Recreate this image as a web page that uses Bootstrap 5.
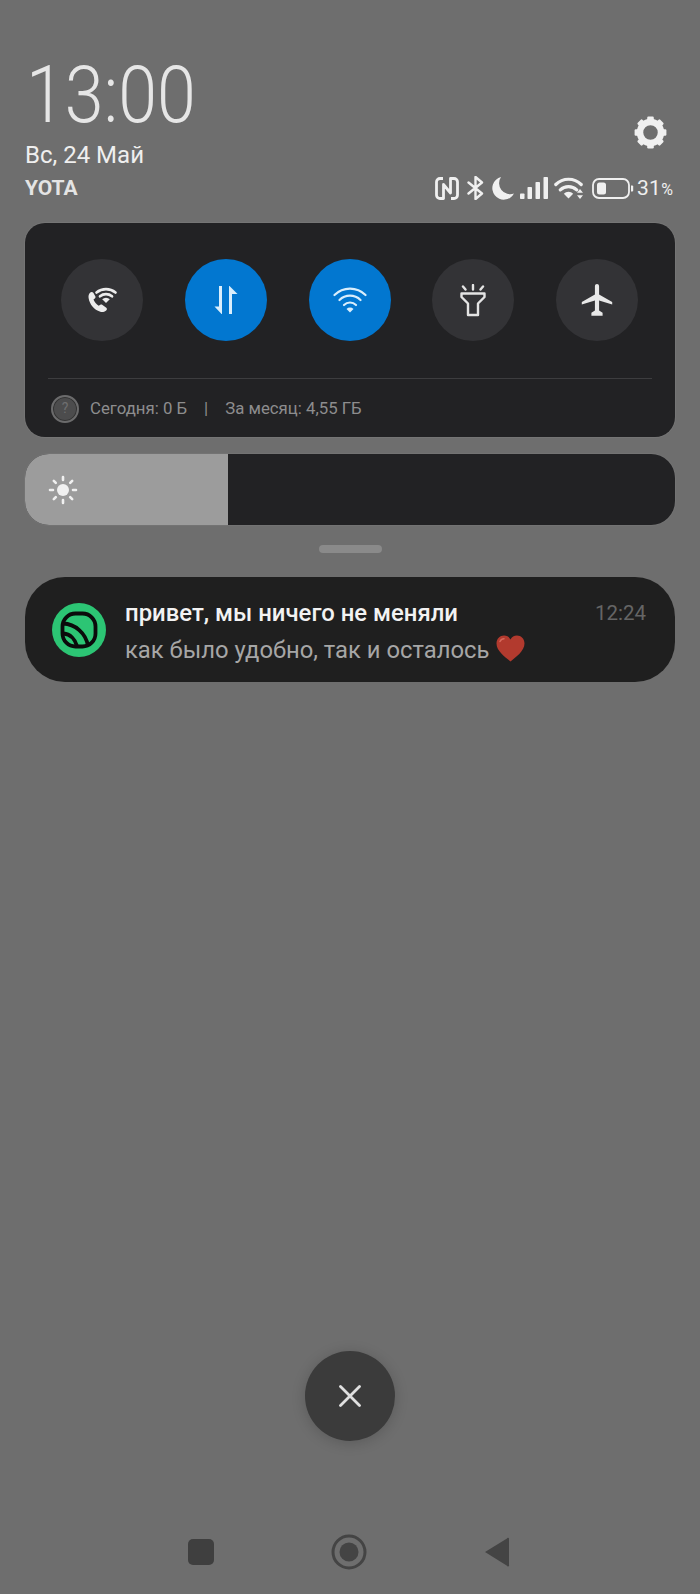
<!doctype html>
<html lang="ru"><head><meta charset="utf-8">
<link href="https://cdn.jsdelivr.net/npm/bootstrap@5.3.0/dist/css/bootstrap.min.css" rel="stylesheet">
<style>
html,body{height:1594px;overflow:hidden}
body{background:#6e6e6e;font-family:Roboto,"Liberation Sans",sans-serif;color:#eee}
.shell{height:1594px;padding:0 25px}
.clock-top{padding-top:48px;height:170px}
.clock-txt{font-size:79px;font-weight:300;line-height:88px;color:#e6e6e6;margin-left:1px;transform:scaleX(.885);transform-origin:left center}
.date-txt{font-size:24px;line-height:30px;color:#efefef;margin-top:1px}
.gear-box{width:35px;height:35px;margin-right:7px;margin-bottom:20px}
.status-row{height:36px}
.carrier{font-size:21px;font-weight:700;line-height:36px;color:#e4e4e4}
.status-icons{gap:8px;color:#f0f0f0}
.pct{font-size:21px;line-height:36px;letter-spacing:.3px;color:#efefef;margin-left:-5px;width:38px;padding-top:2px}
.pct span{font-size:16px}
.qs-panel{background:#222224;border-radius:20px;height:214px;margin-top:17px;padding:36px 23px 0;box-shadow:0 0 0 1px rgba(255,255,255,.05)}
.qs-row{padding:0 14px 0 13px;height:82px}
.qs-btn{width:82px;height:82px;border-radius:50%;background:#333336;color:#e8e8e8}
.qs-on{background:#0277d0;color:#d9eefc}
.qs-div{height:1px;background:#3d3d3f;margin-top:37px}
.qs-data{height:59px;font-size:16.8px;color:#8d8d8e;padding-left:3px}
.qs-help{width:28px;height:28px;border-radius:50%;border:2px solid #6b6b6c;background:#4c4c4d;box-shadow:inset 0 0 0 1px #333;color:#6f6f70;font-size:14px;margin-right:11px}
.qs-sep{margin:0 17px}
.bright{height:71px;margin-top:17px;background:#222224;border-radius:24px;overflow:hidden;box-shadow:0 0 0 1px rgba(255,255,255,.04)}
.bright-fill{width:203px;background:#9c9c9c;padding-left:23px}
.grab{width:63px;height:8px;border-radius:4px;background:#8a8a8a;margin:20px auto 24px}
.notif{height:105px;background:#1f1f1f;border-radius:40px;padding:0 29px 0 27px}
.notif-ic{width:54px;height:54px;margin-right:19px}
.notif-title{font-size:23.9px;font-weight:500;color:#f2f2f2;line-height:30px}
.notif-body{font-size:23.8px;color:#a6a6a6;line-height:34px;margin-top:5px}
.notif-time{font-size:20.5px;color:#656565;line-height:30px}
.heart{width:29px;height:27px;vertical-align:-4px;margin-left:1px}
.notif-txt{margin-top:5px}
.close-fab{width:90px;height:90px;border-radius:50%;background:#3b3b3b;box-shadow:0 2px 14px rgba(0,0,0,.18);margin:669px auto 0}
.nav-bottom{margin-top:93px;padding-left:158px;gap:112px;height:36px}
.nav-bottom>*{width:36px;height:36px}
</style></head><body>
<div class="shell d-flex flex-column">
 <div class="clock-top d-flex justify-content-between align-items-end">
  <div>
   <div class="clock-txt">13:00</div>
   <div class="date-txt">Вс, 24 Май</div>
  </div>
  <svg class="gear-box" viewBox="0 0 35 35" fill="#f0f0f0">
   <circle cx="17.5" cy="17.5" r="10.5" fill="none" stroke="#f0f0f0" stroke-width="6.5"/>
   <rect x="14.2" y="1.6" width="6.6" height="7" rx="1.2"/><rect x="14.2" y="26.4" width="6.6" height="7" rx="1.2"/>
   <rect x="14.2" y="1.6" width="6.6" height="7" rx="1.2" transform="rotate(45 17.5 17.5)"/>
   <rect x="14.2" y="26.4" width="6.6" height="7" rx="1.2" transform="rotate(45 17.5 17.5)"/>
   <rect x="14.2" y="1.6" width="6.6" height="7" rx="1.2" transform="rotate(90 17.5 17.5)"/>
   <rect x="14.2" y="26.4" width="6.6" height="7" rx="1.2" transform="rotate(90 17.5 17.5)"/>
   <rect x="14.2" y="1.6" width="6.6" height="7" rx="1.2" transform="rotate(135 17.5 17.5)"/>
   <rect x="14.2" y="26.4" width="6.6" height="7" rx="1.2" transform="rotate(135 17.5 17.5)"/>
  </svg>
 </div>
 <div class="status-row d-flex justify-content-between align-items-center">
  <div class="carrier">YOTA</div>
  <div class="status-icons d-flex align-items-center">
   <svg width="24" height="23" viewBox="0 0 24 23" fill="none" stroke="#f0f0f0" stroke-width="2.8" stroke-linejoin="round"><path d="M8 1.500H5A3.500 3.500 0 0 0 1.500 5v13A3.500 3.500 0 0 0 5 21.500h3.500V7.500l7 8.500V1.500H19A3.500 3.500 0 0 1 22.500 5v13a3.500 3.500 0 0 1-3.500 3.500h-3"/></svg>
   <svg width="17" height="24" viewBox="0 0 17 24" fill="none" stroke="#f0f0f0" stroke-width="2.400" stroke-linejoin="round" stroke-linecap="round"><path d="M1.500 6.500 15 17.500 8.500 23V1L15 6.500 1.500 17.500"/></svg>
   <svg width="23" height="23" viewBox="0 0 23 23" fill="#f0f0f0" style="margin-left:-1px"><path d="M10 0A11.500 11.500 0 1 0 23 16.500 11 11 0 0 1 10 0z"/></svg>
   <svg width="28" height="22" viewBox="0 0 28 22" fill="#f0f0f0" style="margin-left:-2px"><rect x="0" y="16.500" width="4.500" height="5.500" rx=".8"/><rect x="7.500" y="10" width="4.500" height="12" rx=".8"/><rect x="15.500" y="5" width="4.500" height="17" rx=".8"/><rect x="23.500" y="0" width="4.500" height="22" rx=".8"/></svg>
   <svg width="30" height="22" viewBox="0 0 30 22" fill="none" stroke="#f0f0f0" stroke-width="3.200" stroke-linecap="round" style="margin-left:-2px"><path d="M1.800 7.500a18 18 0 0 1 25.400 0M6.300 12.800a12 12 0 0 1 16.400 0"/><path d="M14.500 21.500l-4.700-4.800a6.800 6.800 0 0 1 9.400 0z" fill="#f0f0f0" stroke="none"/><path d="M26 12l3 3.800h-6zM26 22l3-3.800h-6z" fill="#f0f0f0" stroke="none"/></svg>
   <svg width="42" height="21" viewBox="0 0 42 21" fill="none"><rect x="1" y="1" width="36" height="19" rx="6" stroke="#f0f0f0" stroke-width="1.800"/><rect x="5" y="4.500" width="9" height="12" rx="2.500" fill="#f0f0f0"/><path d="M39 7.500h1.200a1 1 0 0 1 1 1v4a1 1 0 0 1-1 1H39z" fill="#f0f0f0"/></svg>
   <div class="pct text-nowrap">31<span>%</span></div>
  </div>
 </div>

 <div class="qs-panel">
  <div class="qs-row d-flex justify-content-between">
   <div class="qs-btn d-flex align-items-center justify-content-center">
    <svg width="32" height="30" viewBox="0 0 32 30"><path d="M3.800 8c1-1.300 2.800-1.300 3.500-.2l2 3.500c.4.800.2 1.500-.5 2.100l-1.300 1.200c.9 2.500 2.900 4.900 5.200 6.200l1.600-1c.7-.5 1.500-.5 2.200.1l3.800 2.800c1 .9.800 2.200-.4 3.100-1.600 1.200-3.800 1.700-5.600.9C8 24.800 3.600 19.500 2.600 13c-.3-1.900.1-3.800 1.200-5z" fill="#ececec"/><g fill="none" stroke="#ececec" stroke-width="2.700" stroke-linecap="round"><path d="M10.500 7.500a15 15 0 0 1 19 0M14 11.300a9.500 9.500 0 0 1 12 0"/></g><path d="M20 18l-3.800-3.800a5.500 5.500 0 0 1 7.600 0z" fill="#ececec"/></svg>
   </div>
   <div class="qs-btn qs-on d-flex align-items-center justify-content-center">
    <svg width="24" height="30" viewBox="0 0 24 30" fill="#d9eefc"><path d="M5 1h3v28h-.5L.5 21.500H5z"/><path d="M15 29V1h.5l8 8H18v20z"/></svg>
   </div>
   <div class="qs-btn qs-on d-flex align-items-center justify-content-center">
    <svg width="34" height="26" viewBox="0 0 34 26" fill="none" stroke="#d9eefc" stroke-width="2.200" stroke-linecap="round"><path d="M1.500 8a22 22 0 0 1 31 0M6.500 13a15 15 0 0 1 21 0"/><path d="M11 18a8.500 8.500 0 0 1 12 0"/><path d="M17 25.500l-3.500-3.500a5 5 0 0 1 7 0z" fill="#d9eefc" stroke="none"/></svg>
   </div>
   <div class="qs-btn d-flex align-items-center justify-content-center">
    <svg width="26" height="33" viewBox="0 0 26 33" fill="none" stroke="#e4e4e4" stroke-width="2.400" stroke-linecap="round" stroke-linejoin="round"><path d="M13 1v4.500M3 2.500l2.500 3M23 2.500l-2.500 3"/><path d="M1.500 9.500h23v3.500l-6.500 6.500v11.500H8V19.500L1.500 13z"/></svg>
   </div>
   <div class="qs-btn d-flex align-items-center justify-content-center">
    <svg width="32" height="32" viewBox="2 2 20 20" fill="#e8e8e8"><path d="M21.500 14.800v-1.600L13.300 8.500V3.500c0-1-.6-1.500-1.300-1.500s-1.300.5-1.300 1.500v5L2.500 13.200v1.600l8.200-2.500v6.200L8.500 20v1.800h7V20l-2.200-1.500v-6.200z"/></svg>
   </div>
  </div>
  <div class="qs-div"></div>
  <div class="qs-data d-flex align-items-center">
   <div class="qs-help d-flex align-items-center justify-content-center">?</div>
   <span>Сегодня: 0 Б</span><span class="qs-sep">|</span><span>За месяц: 4,55 ГБ</span>
  </div>
 </div>

 <div class="bright d-flex">
  <div class="bright-fill d-flex align-items-center">
   <svg width="30" height="30" viewBox="0 0 30 30" fill="#f0f0f0" stroke="#f0f0f0" stroke-width="2.600" stroke-linecap="round"><circle cx="15" cy="15" r="6" stroke="none"/><path d="M15 2v3M15 25v3M2 15h3M25 15h3M5.800 5.800l2 2M22.200 22.200l2 2M5.800 24.200l2-2M22.200 7.800l2-2"/></svg>
  </div>
 </div>

 <div class="grab"></div>

 <div class="notif d-flex align-items-center">
  <svg class="notif-ic flex-shrink-0" viewBox="0 0 54 54">
   <circle cx="27" cy="27" r="27" fill="#2cc574"/>
   <rect x="10.500" y="10.500" width="33" height="33" rx="13" fill="#2cc574" stroke="#0b0b0b" stroke-width="3.800"/>
   <g fill="none" stroke="#0b0b0b" stroke-width="3.800"><path d="M11 20.500C23 21 34 30 36 43"/><path d="M11.500 30.500C18 31 23 36 25 43"/></g>
  </svg>
  <div class="flex-grow-1 text-nowrap notif-txt">
   <div class="d-flex justify-content-between"><div class="notif-title">привет, мы ничего не меняли</div><div class="notif-time">12:24</div></div>
   <div class="notif-body">как было удобно, так и осталось <svg class="heart" viewBox="0 0 29 27"><path d="M14.500 26.500C9 22 .5 16 .5 8.500.5 3.500 4 .5 8 .5c3 0 5.200 1.500 6.500 4C15.800 2 18 .5 21 .5c4 0 7.500 3 7.500 8 0 7.500-8.500 13.500-14 18z" fill="#b23a2e"/><path d="M4 6.500c.8-1.800 2.200-2.800 4-2.800" stroke="#d8695c" stroke-width="1.500" fill="none" stroke-linecap="round"/></svg></div>
  </div>
 </div>

 <div class="close-fab flex-shrink-0 d-flex align-items-center justify-content-center">
  <svg width="22" height="22" viewBox="0 0 22 22" stroke="#e0e0e0" stroke-width="2.800" stroke-linecap="round"><path d="M1.500 1.500l19 19M20.500 1.500l-19 19"/></svg>
 </div>
 <div class="nav-bottom d-flex flex-shrink-0">
  <svg viewBox="0 0 36 36"><rect x="5" y="5" width="26" height="26" rx="5" fill="#3f3f3f"/></svg>
  <svg viewBox="0 0 36 36"><circle cx="18" cy="18" r="16" fill="none" stroke="#444" stroke-width="3"/><circle cx="18" cy="18" r="9.500" fill="#444"/></svg>
  <svg viewBox="0 0 36 36"><path d="M6 18 28 4.500a1 1 0 0 1 2 .5v26a1 1 0 0 1-2 .8z" fill="#444"/></svg>
 </div>
</div>
</body></html>
